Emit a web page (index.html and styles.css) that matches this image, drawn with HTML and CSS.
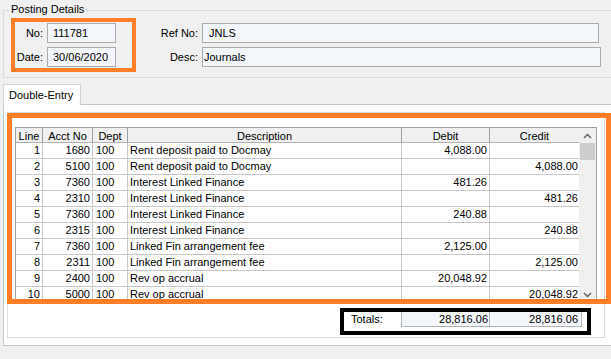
FILE: index.html
```html
<!DOCTYPE html>
<html lang="en">
<head>
  <meta charset="UTF-8">
  <meta name="viewport" content="width=device-width, initial-scale=1.0">
  <title>Posting Details</title>
  <link rel="stylesheet" href="styles.css">
</head>
<body>
  <div class="group">
    <span class="group__title">Posting Details</span>
    <div class="posting posting--marked">
      <span class="posting__label">No:</span>
      <div class="field">111781</div>
      <span class="posting__label">Date:</span>
      <div class="field">30/06/2020</div>
    </div>
    <div class="posting posting--ref">
      <span class="posting__label">Ref No:</span>
      <div class="field field--ref">JNLS</div>
      <span class="posting__label">Desc:</span>
      <div class="field field--desc">Journals</div>
    </div>
  </div>

  <div class="tabs">
    <div class="tab">Double-Entry</div>
  </div>
  <div class="tab__panel">
    <div class="tab__page">
      <div class="entry">
        <div class="grid">
          <table class="grid__table">
            <colgroup>
              <col style="width: 27px">
              <col style="width: 50px">
              <col style="width: 35px">
              <col style="width: 274px">
              <col style="width: 88px">
              <col style="width: 89px">
            </colgroup>
            <thead>
              <tr><th>Line</th><th>Acct No</th><th>Dept</th><th>Description</th><th>Debit</th><th>Credit</th></tr>
            </thead>
            <tbody>
              <tr><td class="num">1</td><td class="num">1680</td><td>100</td><td class="desc">Rent deposit paid to Docmay</td><td class="num">4,088.00</td><td class="num cr"></td></tr>
              <tr><td class="num">2</td><td class="num">5100</td><td>100</td><td class="desc">Rent deposit paid to Docmay</td><td class="num"></td><td class="num cr">4,088.00</td></tr>
              <tr><td class="num">3</td><td class="num">7360</td><td>100</td><td class="desc">Interest Linked Finance</td><td class="num">481.26</td><td class="num cr"></td></tr>
              <tr><td class="num">4</td><td class="num">2310</td><td>100</td><td class="desc">Interest Linked Finance</td><td class="num"></td><td class="num cr">481.26</td></tr>
              <tr><td class="num">5</td><td class="num">7360</td><td>100</td><td class="desc">Interest Linked Finance</td><td class="num">240.88</td><td class="num cr"></td></tr>
              <tr><td class="num">6</td><td class="num">2315</td><td>100</td><td class="desc">Interest Linked Finance</td><td class="num"></td><td class="num cr">240.88</td></tr>
              <tr><td class="num">7</td><td class="num">7360</td><td>100</td><td class="desc">Linked Fin arrangement fee</td><td class="num">2,125.00</td><td class="num cr"></td></tr>
              <tr><td class="num">8</td><td class="num">2311</td><td>100</td><td class="desc">Linked Fin arrangement fee</td><td class="num"></td><td class="num cr">2,125.00</td></tr>
              <tr><td class="num">9</td><td class="num">2400</td><td>100</td><td class="desc">Rev op accrual</td><td class="num">20,048.92</td><td class="num cr"></td></tr>
              <tr><td class="num">10</td><td class="num">5000</td><td>100</td><td class="desc">Rev op accrual</td><td class="num"></td><td class="num cr">20,048.92</td></tr>
            </tbody>
          </table>
          <div class="scroll">
            <div class="scroll__btn">
              <svg width="9" height="6" viewBox="0 0 9 6"><path d="M1 5 L4.5 1.5 L8 5" fill="none" stroke="#606060" stroke-width="1.5"/></svg>
            </div>
            <div class="scroll__thumb"></div>
            <div class="scroll__track"></div>
            <div class="scroll__btn">
              <svg width="9" height="6" viewBox="0 0 9 6"><path d="M1 1 L4.5 4.5 L8 1" fill="none" stroke="#606060" stroke-width="1.5"/></svg>
            </div>
          </div>
        </div>
      </div>
      <div class="totals">
        <span class="totals__label">Totals:</span>
        <div class="totals__field">28,816.06</div>
        <div class="totals__field totals__field--credit">28,816.06</div>
      </div>
    </div>
  </div>
</body>
</html>
```

FILE: styles.css
```css
body {
  margin: 0;
  background: #f0f0f0;
  font: 11px "Liberation Sans", Arial, sans-serif;
  color: #000;
  overflow: hidden;
}

/* posting details group box */
.group {
  position: relative;
  display: flex;
  align-items: flex-start;
  margin: 10px -20px 0 3px;
  padding: 7px 0 5px 7px;
  border: 1px solid #dcdcdc;
}

.group__title {
  position: absolute;
  top: -8px;
  left: 5px;
  padding: 0 2px;
  line-height: 13px;
  background: #f0f0f0;
}

.posting {
  display: grid;
  grid-template-columns: 27px auto;
  grid-auto-rows: 20px;
  gap: 4px;
}

.posting--marked {
  padding: 1px 16px 1px 1px;
  border: 4px solid #fe7f27;
}

.posting--ref {
  grid-template-columns: 58px auto;
  margin: 5px 0 0 4px;
}

.posting__label {
  text-align: right;
  line-height: 20px;
}

.field {
  box-sizing: border-box;
  width: 69px;
  height: 20px;
  padding-left: 5px;
  line-height: 18px;
  background: #f3f6fb;
  border: 1px solid #ababab;
}

.field--ref {
  width: 397px;
  padding-left: 6px;
}

.field--desc {
  width: 399px;
  padding-left: 1px;
}

/* tabs */
.tabs {
  display: flex;
  margin: 6px 0 0 3px;
}

.tab {
  position: relative;
  z-index: 1;
  box-sizing: border-box;
  width: 78px;
  height: 21px;
  margin-bottom: -1px;
  padding-left: 5px;
  line-height: 20px;
  background: #fff;
  border: 1px solid #d3d3d3;
  border-bottom: none;
}

.tab__panel {
  box-sizing: border-box;
  height: 242px;
  margin: 0 -20px 0 3px;
  padding: 7px 0 7px 3px;
  background: #fff;
  border: 1px solid #c6c6c6;
}

.tab__page {
  box-sizing: border-box;
  width: 598px;
  height: 226px;
  border: 1px solid #dcdcdc;
}

/* entry grid */
.entry {
  position: relative;
  padding: 14px 0 0 7px;
}

.entry::after {
  content: "";
  position: absolute;
  left: -1px;
  top: 0;
  box-sizing: border-box;
  width: 604px;
  height: 191px;
  border: 5px solid #fe7f27;
}

.grid {
  display: flex;
  box-sizing: border-box;
  width: 582px;
  height: 176px;
  overflow: hidden;
  border: 1px solid #a0a0a0;
}

.grid__table {
  width: 563px;
  table-layout: fixed;
  border-spacing: 0;
}

.grid__table th {
  padding: 3px 0 0;
  font-weight: normal;
  line-height: 11px;
  background: #f0f0f0;
  border-right: 1px solid #a0a0a0;
  border-bottom: 1px solid #b4b4b4;
}

.grid__table th:last-child {
  border-right: none;
}

.grid__table td {
  padding: 0 0 0 3px;
  height: 15px;
  line-height: 15px;
  white-space: nowrap;
  border-right: 1px solid #c8c8c8;
  border-bottom: 1px solid #c8c8c8;
}

.grid__table td.num {
  padding: 0 2px 0 0;
  text-align: right;
}

.grid__table td.desc {
  padding-left: 2px;
}

.grid__table td.cr {
  padding-right: 1px;
  border-right: none;
}

.scroll {
  display: flex;
  flex-direction: column;
  width: 17px;
  background: #f0f0f0;
}

.scroll__btn {
  display: flex;
  align-items: center;
  justify-content: center;
  height: 15px;
}

.scroll__thumb {
  height: 17px;
  margin: 0 1px;
  background: #cdcdcd;
}

.scroll__track {
  flex: 1;
}

/* totals */
.totals {
  position: relative;
  display: flex;
  margin: 8px 0 0 343px;
}

.totals::after {
  content: "";
  position: absolute;
  left: -11px;
  top: -3px;
  box-sizing: border-box;
  width: 251px;
  height: 27px;
  border: 4px solid #000;
}

.totals__label {
  width: 50px;
  line-height: 16px;
}

.totals__field {
  box-sizing: border-box;
  width: 89px;
  height: 16px;
  padding-right: 1px;
  line-height: 14px;
  text-align: right;
  background: #f3f6fb;
  border: 1px solid #b4b4b4;
}

.totals__field--credit {
  width: 92px;
  padding-right: 3px;
  border-left: none;
}
```
